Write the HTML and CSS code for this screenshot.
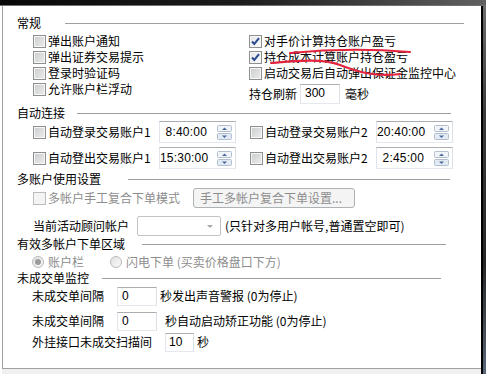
FILE: index.html
```html
<!DOCTYPE html>
<html>

<head lang="zh">
    <meta charset="UTF-8">
    <title>交易设置</title>
    <link rel="stylesheet" href="styles.css">
</head>

<body>
    <div class="topbar"></div>
    <div class="screen">
        <div class="dialog">
            <div class="content">
                <!-- 常规 -->
                <div class="group-title g-general"><span>常规</span></div>
                <div class="general">
                    <div class="col">
                        <div class="check-row"><span class="cb"></span>弹出账户通知</div>
                        <div class="check-row"><span class="cb"></span>弹出证券交易提示</div>
                        <div class="check-row"><span class="cb"></span>登录时验证码</div>
                        <div class="check-row"><span class="cb"></span>允许账户栏浮动</div>
                    </div>
                    <div class="col">
                        <div class="check-row"><span class="cb checked"><svg width="11" height="11" viewBox="0 0 11 11"><path d="M2 5.5 L4.3 8 L9 2.2" fill="none" stroke="#2c4a8e" stroke-width="2"/></svg></span>对手价计算持仓账户盈亏</div>
                        <div class="check-row"><span class="cb checked"><svg width="11" height="11" viewBox="0 0 11 11"><path d="M2 5.5 L4.3 8 L9 2.2" fill="none" stroke="#2c4a8e" stroke-width="2"/></svg></span>持仓成本计算账户持仓盈亏</div>
                        <div class="check-row"><span class="cb"></span>启动交易后自动弹出保证金监控中心</div>
                        <div class="refresh-row">
                            <span>持仓刷新</span>
                            <span class="input">300</span>
                            <span class="unit">毫秒</span>
                        </div>
                    </div>
                </div>

                <!-- 自动连接 -->
                <div class="group-title g-auto"><span>自动连接</span></div>
                <div class="auto">
                    <div class="auto-cell">
                        <span class="cb"></span><span class="auto-label">自动登录交易账户1</span>
                        <div class="timebox"><span class="time">8:40:00</span><svg class="spin" width="15" height="15" viewBox="0 0 15 15"><rect x="0.5" y="0.5" width="14" height="6" rx="1" fill="#f1f4f8" stroke="#b3bfcf"/><rect x="0.5" y="8.5" width="14" height="6" rx="1" fill="#e2eaf4" stroke="#b3bfcf"/><path d="M5 5 L7.5 2.5 L10 5Z" fill="#4a679b"/><path d="M5 10.5 L7.5 13 L10 10.5Z" fill="#4a679b"/></svg></div>
                    </div>
                    <div class="auto-cell">
                        <span class="cb"></span><span class="auto-label">自动登录交易账户2</span>
                        <div class="timebox"><span class="time">20:40:00</span><svg class="spin" width="15" height="15" viewBox="0 0 15 15"><rect x="0.5" y="0.5" width="14" height="6" rx="1" fill="#f1f4f8" stroke="#b3bfcf"/><rect x="0.5" y="8.5" width="14" height="6" rx="1" fill="#e2eaf4" stroke="#b3bfcf"/><path d="M5 5 L7.5 2.5 L10 5Z" fill="#4a679b"/><path d="M5 10.5 L7.5 13 L10 10.5Z" fill="#4a679b"/></svg></div>
                    </div>
                    <div class="auto-cell">
                        <span class="cb"></span><span class="auto-label">自动登出交易账户1</span>
                        <div class="timebox"><span class="time">15:30:00</span><svg class="spin" width="15" height="15" viewBox="0 0 15 15"><rect x="0.5" y="0.5" width="14" height="6" rx="1" fill="#f1f4f8" stroke="#b3bfcf"/><rect x="0.5" y="8.5" width="14" height="6" rx="1" fill="#e2eaf4" stroke="#b3bfcf"/><path d="M5 5 L7.5 2.5 L10 5Z" fill="#4a679b"/><path d="M5 10.5 L7.5 13 L10 10.5Z" fill="#4a679b"/></svg></div>
                    </div>
                    <div class="auto-cell">
                        <span class="cb"></span><span class="auto-label">自动登出交易账户2</span>
                        <div class="timebox"><span class="time">2:45:00</span><svg class="spin" width="15" height="15" viewBox="0 0 15 15"><rect x="0.5" y="0.5" width="14" height="6" rx="1" fill="#f1f4f8" stroke="#b3bfcf"/><rect x="0.5" y="8.5" width="14" height="6" rx="1" fill="#e2eaf4" stroke="#b3bfcf"/><path d="M5 5 L7.5 2.5 L10 5Z" fill="#4a679b"/><path d="M5 10.5 L7.5 13 L10 10.5Z" fill="#4a679b"/></svg></div>
                    </div>
                </div>

                <!-- 多账户使用设置 -->
                <div class="group-title g-multi"><span>多账户使用设置</span></div>
                <div class="multi-row">
                    <span class="cb disabled"></span><span class="multi-label">多帐户手工复合下单模式</span>
                    <span class="btn">手工多帐户复合下单设置...</span>
                </div>
                <div class="advisor-row">
                    <span class="advisor-label">当前活动顾问帐户</span>
                    <span class="combo"><span class="arrow"></span></span>
                    <span class="note">(只针对多用户帐号,普通置空即可)</span>
                </div>

                <!-- 有效多帐户下单区域 -->
                <div class="group-title g-area"><span>有效多帐户下单区域</span></div>
                <div class="radio-row">
                    <span class="radio-item first"><span class="radio on"></span>账户栏</span>
                    <span class="radio-item"><span class="radio"></span>闪电下单 (买卖价格盘口下方)</span>
                </div>

                <!-- 未成交单监控 -->
                <div class="group-title g-pending"><span>未成交单监控</span></div>
                <div class="pending-row">
                    <span class="pending-label">未成交单间隔</span>
                    <span class="input">0</span>
                    <span class="suffix">秒发出声音警报 (0为停止)</span>
                </div>
                <div class="pending-row second">
                    <span class="pending-label">未成交单间隔</span>
                    <span class="input">0</span>
                    <span class="suffix wide">秒自动启动矫正功能 (0为停止)</span>
                </div>
                <div class="pending-row third">
                    <span class="pending-label long">外挂接口未成交扫描间</span>
                    <span class="input short">10</span>
                    <span class="suffix">秒</span>
                </div>
            </div>
            <div class="footer"></div>
        </div>
        <div class="frame"></div>
    </div>

    <!-- 红色标注 -->
    <svg class="marks" width="486" height="374" viewBox="0 0 486 374">
        <path d="M290 53 Q 350 47 410 52" fill="none" stroke="#e4243c" stroke-width="2.2" stroke-linecap="round"/>
        <path d="M271 63 C 295 61, 322 58, 340 65 S 375 77, 400 74" fill="none" stroke="#e4243c" stroke-width="2.2" stroke-linecap="round"/>
    </svg>
</body>

</html>
```

FILE: styles.css
```css
/* 基础 */
* {
    box-sizing: border-box;
}

html,
body {
    margin: 0;
    padding: 0;
}

body {
    width: 486px;
    height: 374px;
    overflow: hidden;
    position: relative;
    background: #ffffff;
    font-family: "Noto Sans CJK SC", sans-serif;
    font-size: 12px;
    line-height: 16px;
    color: #000000;
}

/* 窗口顶部的深色边 */
.topbar {
    height: 6px;
    background: linear-gradient(to right, #080808, #1c1c1c 50%, #606060);
    border-bottom: 1px solid #707070;
}

.screen {
    display: flex;
    height: 368px;
}

.dialog {
    width: 479px;
    margin-left: 2px;
    display: flex;
    flex-direction: column;
}

.content {
    flex: 1;
    border-left: 1px solid #a0a0a0;
    border-bottom: 1px solid #a0a0a0;
    padding-top: 9px;
}

.footer {
    height: 5px;
    background: #f0f0f0;
}

/* 右侧窗口边框 */
.frame {
    flex: 1;
    border-left: 2px solid #000000;
    background: linear-gradient(#6c6c6c, #3a3a3a 30%, #262626 70%, #5a6878);
}

/* 分组标题 + 横线 */
.group-title {
    display: flex;
    align-items: center;
    height: 16px;
    padding-left: 14px;
}

.group-title::after {
    content: "";
    flex: 1;
    border-top: 1px solid #a0a0a0;
}

.g-general::after {
    margin: 0 17px 0 24px;
}

.g-auto::after {
    margin: 0 30px 0 12px;
}

.g-multi::after {
    margin: 0 31px 0 27px;
}

.g-area::after {
    margin: 0 35px 0 17px;
}

.g-pending::after {
    margin: 0 40px 0 13px;
}

/* 复选框 */
.cb {
    width: 13px;
    height: 13px;
    flex: none;
    border: 1px solid #8e8f8f;
    background: linear-gradient(135deg, #c9cbce, #eeeeef);
    box-shadow: inset 0 0 0 1px #f6f6f6;
    display: flex;
    align-items: center;
    justify-content: center;
}

.cb.checked {
    background: linear-gradient(135deg, #e4e6ea, #fbfbfb);
}

.cb.disabled {
    border-color: #bcbcbc;
    background: #f4f4f4;
    box-shadow: none;
}

.check-row {
    display: flex;
    align-items: center;
    gap: 2px;
    height: 16px;
}

/* 常规 */
.general {
    display: grid;
    grid-template-columns: 216px 1fr;
    padding-left: 30px;
    margin-top: 2px;
}

.refresh-row {
    display: flex;
    align-items: center;
    height: 22px;
    margin-top: 2px;
}

.refresh-row .input {
    margin-left: 3px;
    height: 20px;
}

.unit {
    margin-left: 5px;
}

/* 输入框 */
.input {
    width: 40px;
    height: 19px;
    border: 1px solid;
    border-color: #abadb3 #dbdfe6 #e3e9ef #e2e3ea;
    padding-left: 4px;
    font-family: "Liberation Sans", sans-serif;
    line-height: 17px;
}

.input.short {
    width: 29px;
    padding-left: 3px;
}

/* 自动连接 */
.auto {
    display: grid;
    grid-template-columns: 217px 1fr;
    row-gap: 4px;
    padding-left: 30px;
    margin-bottom: 2px;
}

.auto-cell {
    display: flex;
    align-items: center;
    height: 22px;
}

.auto-label {
    width: 111px;
    margin-left: 2px;
}

.timebox {
    width: 77px;
    height: 22px;
    border: 1px solid;
    border-color: #abadb3 #dbdfe6 #e3e9ef #e2e3ea;
    display: flex;
    align-items: center;
}

.time {
    width: 47px;
    text-align: right;
    font-family: "Liberation Sans", sans-serif;
    letter-spacing: 0.2px;
}

.spin {
    margin-left: 10px;
}

/* 多账户使用设置 */
.multi-row {
    display: flex;
    align-items: center;
    height: 20px;
    padding-left: 30px;
    margin-top: 1px;
}

.multi-label {
    width: 145px;
    margin-left: 2px;
    color: #8d8d8d;
}

.btn {
    width: 162px;
    height: 20px;
    border: 1px solid #adb2b5;
    border-radius: 3px;
    background: #f4f4f4;
    color: #8d8d8d;
    padding-left: 6px;
    line-height: 18px;
}

.advisor-row {
    display: flex;
    align-items: center;
    height: 20px;
    padding-left: 30px;
    margin-top: 8px;
}

.advisor-label {
    width: 104px;
}

.combo {
    width: 84px;
    height: 20px;
    border: 1px solid #c3c3c3;
    border-radius: 2px;
    position: relative;
}

/* 下拉箭头 */
.combo .arrow {
    position: absolute;
    right: 7px;
    top: 8px;
    border-left: 3px solid transparent;
    border-right: 3px solid transparent;
    border-top: 3px solid #a8a8a8;
}

.note {
    margin-left: 4px;
}

/* 单选 */
.radio-row {
    display: flex;
    align-items: center;
    height: 16px;
    padding-left: 29px;
    margin-top: 2px;
    color: #8d8d8d;
}

.radio-item {
    display: flex;
    align-items: center;
    gap: 4px;
}

.radio-item.first {
    width: 78px;
}

.radio {
    width: 12px;
    height: 12px;
    border-radius: 50%;
    border: 1px solid #b9b9b9;
    background: linear-gradient(135deg, #e2e2e2, #fafafa);
    display: flex;
    align-items: center;
    justify-content: center;
}

.radio.on::after {
    content: "";
    width: 6px;
    height: 6px;
    border-radius: 50%;
    background: #9a9a9a;
}

/* 未成交单监控 */
.pending-row {
    display: flex;
    align-items: center;
    height: 20px;
    padding-left: 29px;
}

.pending-row.second {
    margin-top: 5px;
}

.pending-row.third {
    margin-top: 1px;
}

.pending-label {
    width: 85px;
}

.pending-label.long {
    width: 133px;
}

.suffix {
    margin-left: 3px;
}

.suffix.wide {
    margin-left: 8px;
}

/* 红色手绘标注 */
.marks {
    position: absolute;
    left: 0;
    top: 0;
    pointer-events: none;
}
```
